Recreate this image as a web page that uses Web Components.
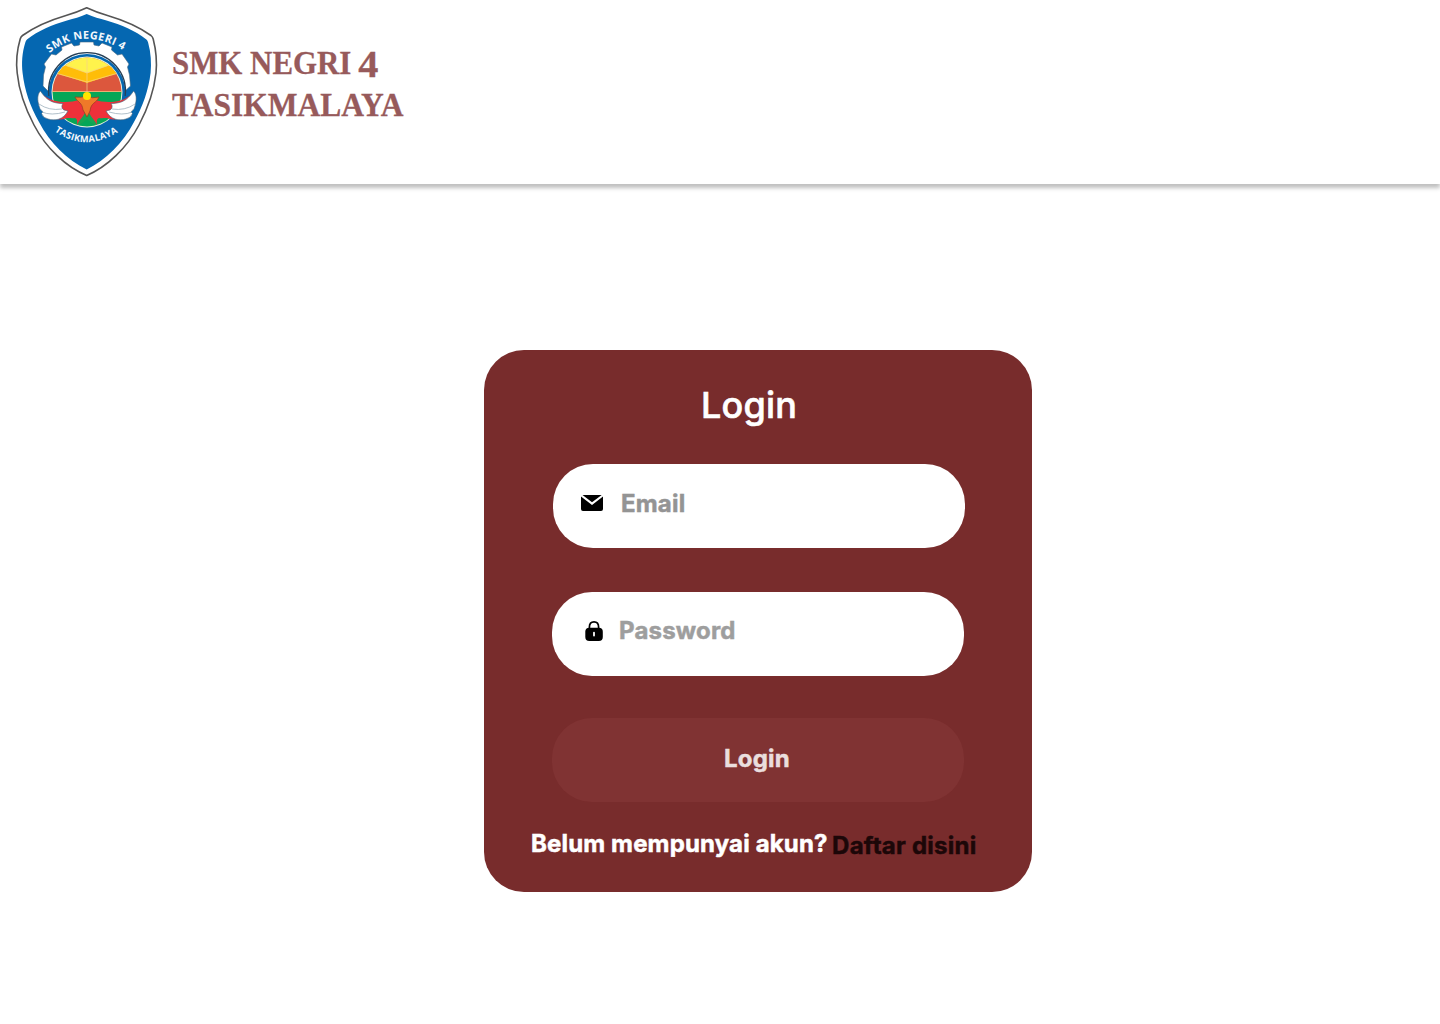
<!DOCTYPE html>
<html lang="id">
<head>
<meta charset="utf-8">
<title>Login</title>
<style>
html,body{margin:0;height:100%;background:#fff}
body{font-family:Inter,"Liberation Sans",sans-serif}
</style>
</head>
<body>
<login-page></login-page>
<script>
const define=(name,html)=>customElements.define(name,class extends HTMLElement{
  constructor(){super();this.attachShadow({mode:'open'}).innerHTML=html;}
});

define('school-crest',`
<style>:host{display:block;width:172px;height:184px;flex:none}svg{display:block}text{font-family:"Open Sans","Noto Sans",sans-serif;font-weight:700;fill:#f3f8fc}</style>
<svg width="172" height="184" viewBox="0 0 172 184">
<defs>
<path id="top" d="M49.500 53Q84 25 126 52"/>
<path id="bottom" d="M54.500 131.200Q86 153.500 121 130.400"/>
<clipPath id="disc"><circle cx="87" cy="92" r="34.500"/></clipPath>
</defs>
<path d="M86.700 7.800C79 11.500 73 13.500 66 15.500C49 20.500 35 26.500 22.500 35.500Q20.800 36.800 20.200 39C17 50 16 63 17.200 73C19 91 25 108 34 125C46 148 66 167 86.700 175.500C107 167 127 148 139 125C148 108 154 91 156 73C157 63 156 50 153.200 39Q152.600 36.800 151 35.500C138.500 26.500 124.500 20.500 107.500 15.500C100.500 13.500 94.500 11.500 86.700 7.800Z" fill="#fff" stroke="#555" stroke-width="1.600"/>
<path d="M86.700 14C80 17 74 18.500 67 20.500C52 25 38.500 30.500 27 39.500Q25.800 40.500 25.300 42.500C22 53 21.500 63 22.600 73C24.500 90 30 106 39 122C50 143 67 160 86.700 169.500C106 160 123 143 134 122C143 106 148.500 90 150.600 73C151.500 63 151 53 148.100 42.500Q147.600 40.500 146.400 39.500C135 30.500 121.500 25 106.500 20.500C99.500 18.500 93.500 17 86.700 14Z" fill="#0567b1"/>
<text font-size="10.800" textLength="79"><textPath href="#top">SMK NEGERI 4</textPath></text>
<text font-size="9.200" textLength="68"><textPath href="#bottom">TASIKMALAYA</textPath></text>
<path d="M43 86L43.500 75L45.500 67L44 64L51.500 54L56 55L62 50L61.500 47L71.500 43L74 46L79.500 45L80 42H93.500L94 45L99 46L102 43L112 47L111.500 50L117.500 55L122 54L129 64L127.500 67L129.500 75L130.500 86L124 92H49Z" fill="#fff" stroke="#426783" stroke-width=".6"/>
<circle cx="87" cy="92.500" r="38.500" fill="#0567b1"/>
<path d="M48.800 96A38.500 38.500 0 1 1 125.200 96" fill="none" stroke="#263f55" stroke-width="1.200"/>
<circle cx="87" cy="92" r="35.500" fill="#e7f1dd"/>
<g clip-path="url(#disc)">
<path d="M50 55H124V92H50Z" fill="#dc573d"/>
<path d="M50 78L64 63L87 71L110 63L124 78L117 73L87 83L57 73Z" fill="#ffbd08"/>
<path d="M54 73L60 63L87 70L114 63L120 73L87 82.500Z" fill="#ffbd08"/>
<path d="M61 64L70 52H104L113 64L87 73Z" fill="#fff34c"/>
<path d="M50 92H124V129H50Z" fill="#06a657"/>
<path d="M50 91.500H124M62 64L87 73L112 64M54 72.500L87 82L120 72.500M87 57V92" stroke="#f6d18a" stroke-width=".7" fill="none"/>
</g>
<path d="M42 94C49 100 56 102 65 102Q73 102 79 100L87 104L95 100Q101 102 109 102C118 102 125 100 132 94L131 108C127 115 118 121 110 119C106 117 103 119 99 118C96 119 97 123 97 125C92 123 88 120 87 116C86 120 82 123 77 125C77 123 78 119 75 118C71 119 68 117 64 119C56 121 46 115 42 108Z" fill="#ee313a"/>
<path d="M40.500 91C45 98 50 102 57 103Q60 103.500 63 103.500C61 106 62 109 64 110L68 111C63 120 55 121 48 119Q43 118 41.500 113.500L43 112Q39 109 38.500 104C37 98 38 93 40.500 91Z" fill="#fff" stroke="#415e74" stroke-width=".6"/>
<path d="M133.500 91C129 98 124 102 117 103Q114 103.500 111 103.500C113 106 112 109 110 110L106 111C111 120 119 121 126 119Q131 118 132.500 113.500L131 112Q135 109 135.500 104C137 98 136 93 133.500 91Z" fill="#fff" stroke="#415e74" stroke-width=".6"/>
<path d="M39 104Q49 111 62 109M42 112Q51 116 65 112M135 104Q125 111 112 109M132 112Q123 116 109 112" stroke="#9db0bc" stroke-width=".8" fill="none"/>
<path d="M77 125C79 120 83 118 87 109C91 118 95 120 97 125Q92 124 87 119Q82 124 77 125Z" fill="#16a552"/>
<path d="M75 97Q81 98 87 96Q92 99 99 97C96 104 91 102 90 111L87 117L83 110C82 102 78 103 75 97Z" fill="#ef7929" stroke="#963822" stroke-width=".7"/>
<circle cx="87" cy="96" r="4" fill="#ffe500"/>
</svg>`);

define('school-name',`
<style>
:host{display:block;color:#975a5b;font:700 33.500px/42px "Liberation Serif",serif;padding-bottom:17px;-webkit-text-stroke:.3px currentColor}
div{white-space:nowrap;transform-origin:0 0}
.one{transform:scaleX(.922)}.two{transform:scaleX(.94)}
span{display:inline-block;font-size:37px;line-height:30px;transform:translate(-1px,3px) scaleX(1.18);transform-origin:0 50%}
</style><div class="one">SMK NEGRI <span>4</span></div><div class="two">TASIKMALAYA</div>`);

define('site-header',`
<style>:host{display:flex;align-items:center;height:184px;background:#fff;box-shadow:0 4px 4px rgba(0,0,0,.25)}</style>
<slot></slot>`);

define('login-field',`
<style>
:host{display:flex;align-items:center;box-sizing:border-box;width:412px;height:84px;border-radius:40px;background:#fff;font-weight:700;font-size:24px;line-height:29px;padding-bottom:6px;letter-spacing:.18px;-webkit-text-stroke:.5px currentColor}
::slotted(svg){display:block;flex:none}
</style><slot name="icon"></slot><slot></slot>`);

define('login-button',`
<style>:host{display:block}button{display:block;width:412px;height:84px;border:0;border-radius:40px;background:#803333;color:#eadede;font:700 24px/29px Inter,sans-serif;padding:0 2px 4px 0;letter-spacing:.18px;-webkit-text-stroke:.5px currentColor}</style>
<button><slot></slot></button>`);

define('login-card',`
<style>
:host{display:flex;flex-direction:column;box-sizing:border-box;width:548px;height:542px;margin:166px 0 0 484px;padding:33px 0 0 68px;border-radius:40px;background:#782c2c}
h1{margin:0;color:#fff;font-weight:500;font-size:36px;line-height:44px;padding-left:149px;letter-spacing:.2px;-webkit-text-stroke:.6px currentColor}
.email{margin:37px 0 0 1px;color:#949494}
.pass{margin-top:44px;padding-bottom:7px;color:#9e9e9e}
login-button{margin-top:42px}
.email span{margin-left:17px}.pass span{margin-left:15px}
p{display:flex;margin:27px 0 0 -21px;color:#fff;font-weight:700;font-size:24px;line-height:29px;white-space:nowrap;letter-spacing:.15px;-webkit-text-stroke:.5px currentColor}
a{color:#1c0708;padding-top:2px;margin-left:4.500px;letter-spacing:.24px}
</style>
<h1>Login</h1>
<login-field class="email">
<svg slot="icon" width="51" height="24" viewBox="0 0 51 24"><path d="M28 5.500V18Q28 20 30 20H48Q50 20 50 18V5.500L39 14Z"/><path d="M29.500 4H48.700L39 11.300Z"/></svg>
<span>Email</span></login-field>
<login-field class="pass">
<svg slot="icon" width="52" height="24" viewBox="0 0 52 24"><path d="M37.400 10V8Q37.400 2.800 42 2.800T46.600 8V10" fill="none" stroke="#000" stroke-width="1.700"/><rect x="33.300" y="8.700" width="17.500" height="13.300" rx="4"/><path d="M42 13.700V16.500" stroke="#fff" stroke-width="1.800" stroke-linecap="round"/></svg>
<span>Password</span></login-field>
<login-button>Login</login-button>
<p><span>Belum mempunyai akun?</span><a>Daftar disini</a></p>`);

define('login-page',`
<style>:host{display:block;height:1024px;overflow:hidden;background:#fff}</style>
<site-header><school-crest></school-crest><school-name></school-name></site-header>
<login-card></login-card>`);
</script>
</body>
</html>
